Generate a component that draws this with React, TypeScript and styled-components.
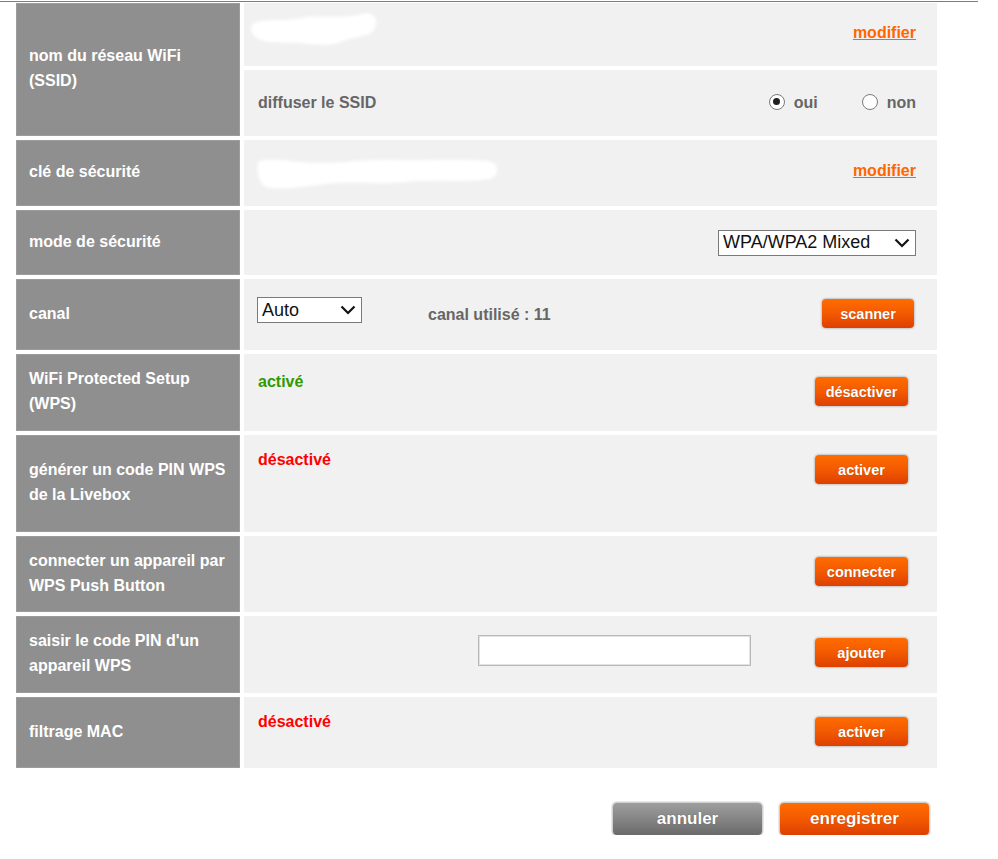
import React from 'react';
import styled, { createGlobalStyle } from 'styled-components';

const GlobalStyle = createGlobalStyle`
    body {
        margin: 0;
        background: #fff;
        font-family: "Liberation Sans", Arial, Helvetica, sans-serif;
    }
`;

const Page = styled.div`
    padding-top: 1px;
    width: 998px;
`;

const TopRule = styled.div`
    width: 978px;
    height: 1px;
    background: #7d7d7d;
`;

const Table = styled.div`
    display: flex;
    flex-direction: column;
    gap: 4px;
    width: 921px;
    margin: 1px 0 0 16px;
`;

const Row = styled.div<{ $h: number }>`
    display: flex;
    gap: 4px;
    height: ${(p) => p.$h}px;
`;

const Label = styled.div`
    flex: 0 0 224px;
    box-sizing: border-box;
    display: flex;
    align-items: center;
    padding: 0 12px 3px 13px;
    background: #8f8f8f;
    box-shadow: inset 0 0 0 1px #9c9c9c;
    color: #fff;
    font-size: 16px;
    font-weight: bold;
    line-height: 25px;
`;

const Stack = styled.div`
    flex: 1;
    display: flex;
    flex-direction: column;
    gap: 4px;
`;

const Cell = styled.div<{ $top?: number }>`
    flex: 1;
    box-sizing: border-box;
    display: flex;
    align-items: ${(p) => (p.$top !== undefined ? 'flex-start' : 'center')};
    padding: ${(p) => (p.$top !== undefined ? `${p.$top}px` : '0')} 21px 0 14px;
    background: #f1f1f1;
    color: #666;
    font-size: 16px;
    font-weight: bold;
`;

// one of the stacked halves of the SSID row
const SubCell = styled(Cell)<{ $h: number }>`
    flex: none;
    height: ${(p) => p.$h}px;
`;

const Spacer = styled.div`
    flex: 1;
`;

const Text = styled.span<{ $mt?: number; $ml?: number }>`
    line-height: 18px;
    margin-top: ${(p) => p.$mt ?? 0}px;
    margin-left: ${(p) => p.$ml ?? 0}px;
`;

const Status = styled.span<{ $on?: boolean }>`
    line-height: 18px;
    color: ${(p) => (p.$on ? '#339900' : '#ff0000')};
`;

const EditLink = styled.a`
    margin-bottom: 4px;
    color: #ff6600;
    text-decoration: underline;
    font-size: 16px;
    font-weight: bold;
    cursor: pointer;
`;

const ActionButton = styled.button<{ $tight?: boolean }>`
    width: ${(p) => (p.$tight ? 92 : 93)}px;
    height: 29px;
    margin-top: ${(p) => (p.$tight ? 2 : 4)}px;
    margin-right: ${(p) => (p.$tight ? 2 : 8)}px;
    padding: 0;
    border: none;
    border-radius: 4px;
    background: linear-gradient(to bottom, #ff6c00 0%, #f35a00 50%, #dd4000 100%);
    box-shadow: 0 0 0 1px #d0d0d0, 0 0 0 2px #e6e6e6;
    color: #fff;
    font-family: inherit;
    font-size: 14.5px;
    font-weight: bold;
    text-shadow: 0 0 1px rgba(120, 40, 0, 0.5);
    cursor: pointer;
`;

const Footer = styled.div`
    display: flex;
    justify-content: flex-end;
    gap: 18px;
    width: 921px;
    margin: 35px 0 0 16px;
    padding-right: 8px;
    box-sizing: border-box;
`;

const FooterButton = styled.button<{ $grey?: boolean }>`
    width: 149px;
    height: 32px;
    padding: 0;
    border: none;
    border-radius: 4px;
    background: ${(p) =>
        p.$grey
            ? 'linear-gradient(to bottom, #9e9e9e 0%, #858585 50%, #6a6a6a 100%)'
            : 'linear-gradient(to bottom, #ff6c00 0%, #f35a00 50%, #dd4000 100%)'};
    box-shadow: 0 0 0 1px #d0d0d0, 0 0 0 2px #e8e8e8;
    color: #fff;
    font-family: inherit;
    font-size: 17px;
    font-weight: bold;
    text-shadow: 0 0 1px rgba(0, 0, 0, 0.4);
    cursor: pointer;
`;

const Radios = styled.div`
    display: flex;
    align-items: center;
    gap: 44px;
`;

const RadioOption = styled.label`
    display: flex;
    align-items: center;
    gap: 9px;
    line-height: 18px;
`;

const RadioDot = styled.span<{ $checked?: boolean }>`
    position: relative;
    width: 16px;
    height: 16px;
    box-sizing: border-box;
    border-radius: 50%;
    border: 1px solid #7a7a7a;
    background: #fff;
    margin-top: -3px;

    &::after {
        content: '';
        display: ${(p) => (p.$checked ? 'block' : 'none')};
        position: absolute;
        left: 3.5px;
        top: 3.5px;
        width: 7px;
        height: 7px;
        border-radius: 50%;
        background: #1e1e1e;
    }
`;

const SelectBox = styled.div<{ $w: number }>`
    display: flex;
    align-items: center;
    justify-content: space-between;
    box-sizing: border-box;
    width: ${(p) => p.$w}px;
    height: 26px;
    padding: 0 5px 0 4px;
    border: 1px solid #7a7a7a;
    background: #fff;
    color: #111;
    font-size: 18px;
    font-weight: normal;
`;

const PinInput = styled.input`
    width: 273px;
    height: 31px;
    box-sizing: border-box;
    margin: 1px 64px 0 0;
    border: 1px solid #b9b9b9;
    box-shadow: inset 0 0 0 1px #e2e2e2;
    background: #fff;
    outline: none;
`;

const Masked = styled.svg<{ $ml: number; $mt?: number }>`
    display: block;
    margin-left: ${(p) => p.$ml}px;
    margin-top: ${(p) => p.$mt ?? 0}px;
    align-self: ${(p) => (p.$mt !== undefined ? 'flex-start' : 'center')};
`;

const Chevron = () => (
    <svg width="16" height="10" viewBox="0 0 16 10">
        <path d="M1.5 1.5 L8 8 L14.5 1.5" fill="none" stroke="#111" strokeWidth="2.2" />
    </svg>
);

const Select: React.FC<{ value: string; width: number }> = ({ value, width }) => (
    <SelectBox $w={width}>
        <span>{value}</span>
        <Chevron />
    </SelectBox>
);

// hidden values (network name and key) are painted over with white
const SsidMask = () => (
    <Masked $ml={-9} $mt={7} width="132" height="40" viewBox="0 0 132 40">
        <defs>
            <filter id="soft1" x="-10%" y="-20%" width="120%" height="140%">
                <feGaussianBlur stdDeviation="1.6" />
            </filter>
        </defs>
        <g fill="#fff" filter="url(#soft1)">
            <path d="M4 14 C14 8 34 12 52 8 C70 4 94 10 112 4 C124 1 130 8 126 18 C122 28 104 26 92 32 C80 37 62 34 48 33 C32 32 18 34 8 28 C2 24 0 18 4 14 Z" />
        </g>
    </Masked>
);

const KeyMask = () => (
    <Masked $ml={-2} width="246" height="40" viewBox="0 0 246 40">
        <defs>
            <filter id="soft2" x="-5%" y="-20%" width="110%" height="140%">
                <feGaussianBlur stdDeviation="1.6" />
            </filter>
        </defs>
        <g fill="#fff" filter="url(#soft2)">
            <path d="M3 8 C20 4 40 10 62 10 C90 10 110 6 140 7 C170 8 200 5 232 8 C244 10 244 22 234 26 C206 30 180 26 150 29 C120 32 96 28 70 31 C46 34 24 37 10 34 C2 30 0 14 3 8 Z" />
        </g>
    </Masked>
);

export default function App() {
    return (
        <Page>
            <GlobalStyle />
            <TopRule />
            <Table>
                <Row $h={133}>
                    <Label>nom du réseau WiFi (SSID)</Label>
                    <Stack>
                        <SubCell $h={63}>
                            <SsidMask />
                            <Spacer />
                            <EditLink>modifier</EditLink>
                        </SubCell>
                        <SubCell $h={66}>
                            <Text>diffuser le SSID</Text>
                            <Spacer />
                            <Radios>
                                <RadioOption>
                                    <RadioDot $checked />
                                    oui
                                </RadioOption>
                                <RadioOption>
                                    <RadioDot />
                                    non
                                </RadioOption>
                            </Radios>
                        </SubCell>
                    </Stack>
                </Row>

                <Row $h={66}>
                    <Label>clé de sécurité</Label>
                    <Cell>
                        <KeyMask />
                        <Spacer />
                        <EditLink>modifier</EditLink>
                    </Cell>
                </Row>

                <Row $h={65}>
                    <Label>mode de sécurité</Label>
                    <Cell>
                        <Spacer />
                        <Select value="WPA/WPA2 Mixed" width={198} />
                    </Cell>
                </Row>

                <Row $h={71}>
                    <Label>canal</Label>
                    <Cell $top={18} style={{ paddingLeft: 13 }}>
                        <Select value="Auto" width={105} />
                        <Text $mt={9} $ml={66}>canal utilisé : 11</Text>
                        <Spacer />
                        <ActionButton $tight>scanner</ActionButton>
                    </Cell>
                </Row>

                <Row $h={77}>
                    <Label>WiFi Protected Setup (WPS)</Label>
                    <Cell $top={19}>
                        <Status $on>activé</Status>
                        <Spacer />
                        <ActionButton>désactiver</ActionButton>
                    </Cell>
                </Row>

                <Row $h={97}>
                    <Label>générer un code PIN WPS de la Livebox</Label>
                    <Cell $top={16}>
                        <Status>désactivé</Status>
                        <Spacer />
                        <ActionButton>activer</ActionButton>
                    </Cell>
                </Row>

                <Row $h={76}>
                    <Label>connecter un appareil par WPS Push Button</Label>
                    <Cell $top={17}>
                        <Spacer />
                        <ActionButton>connecter</ActionButton>
                    </Cell>
                </Row>

                <Row $h={77}>
                    <Label>saisir le code PIN d'un appareil WPS</Label>
                    <Cell $top={18}>
                        <Spacer />
                        <PinInput type="text" />
                        <ActionButton>ajouter</ActionButton>
                    </Cell>
                </Row>

                <Row $h={71}>
                    <Label>filtrage MAC</Label>
                    <Cell $top={16}>
                        <Status>désactivé</Status>
                        <Spacer />
                        <ActionButton>activer</ActionButton>
                    </Cell>
                </Row>
            </Table>

            <Footer>
                <FooterButton $grey>annuler</FooterButton>
                <FooterButton>enregistrer</FooterButton>
            </Footer>
        </Page>
    );
}
